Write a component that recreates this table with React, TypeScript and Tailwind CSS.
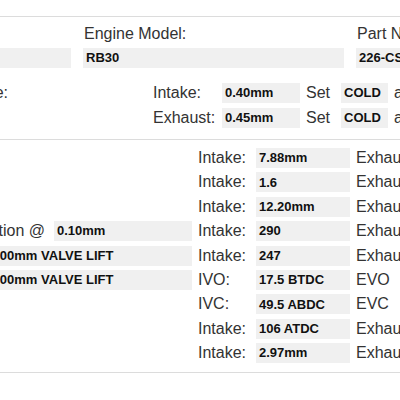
import React from "react";

function Box({ children, className = "" }: { children?: React.ReactNode; className?: string }) {
  return (
    <div
      className={
        "h-5 shrink-0 bg-[#f0f0f0] pl-[3px] flex items-center text-[13px] font-bold text-[#111] whitespace-nowrap overflow-hidden " +
        className
      }
    >
      {children}
    </div>
  );
}

function Label({ children, className = "" }: { children: React.ReactNode; className?: string }) {
  return (
    <div className={"shrink-0 text-[16px] leading-5 text-[#333] whitespace-nowrap " + className}>
      {children}
    </div>
  );
}

const rightRows: { l: string; v: string; r: string; rv: string }[] = [
  { l: "Intake:", v: "7.88mm", r: "Exhaust:", rv: "7.88mm" },
  { l: "Intake:", v: "1.6", r: "Exhaust:", rv: "1.6" },
  { l: "Intake:", v: "12.20mm", r: "Exhaust:", rv: "12.20mm" },
  { l: "Intake:", v: "290", r: "Exhaust:", rv: "290" },
  { l: "Intake:", v: "247", r: "Exhaust:", rv: "247" },
  { l: "IVO:", v: "17.5 BTDC", r: "EVO", rv: "57.5 BBDC" },
  { l: "IVC:", v: "49.5 ABDC", r: "EVC", rv: "9.5 ATDC" },
  { l: "Intake:", v: "106 ATDC", r: "Exhaust:", rv: "114 BTDC" },
  { l: "Intake:", v: "2.97mm", r: "Exhaust:", rv: "2.66mm" },
];

export default function App() {
  return (
    <div className="w-[400px] h-[400px] overflow-hidden bg-white font-['Liberation_Sans',Arial,sans-serif]">
      <div className="h-4" />
      {/* Section 1 */}
      <div className="border-t border-[#dcdcdc] pt-[7px] pb-[11px]">
        <div className="-ml-[190px] grid grid-cols-[261px_261px_261px] gap-x-3">
          <Label className="pl-px">Engine Make:</Label>
          <Label className="pl-px">Engine Model:</Label>
          <Label className="pl-px">Part Number:</Label>
          <Box className="mt-1">NISSAN</Box>
          <Box className="mt-1">RB30</Box>
          <Box className="mt-1">226-CS</Box>
        </div>
        <div className="mt-[15px] flex items-center">
          <div className="w-[8px] shrink-0 flex justify-end">
            <Label>Valve Clearance:</Label>
          </div>
          <Label className="ml-[145px] w-[69px]">Intake:</Label>
          <Box className="w-[78px]">0.40mm</Box>
          <Label className="ml-[6px] w-[35px]">Set</Label>
          <Box className="w-[47px]">COLD</Box>
          <Label className="ml-[6px]">at</Label>
        </div>
        <div className="mt-[5px] flex items-center">
          <Label className="ml-[153px] w-[69px]">Exhaust:</Label>
          <Box className="w-[78px]">0.45mm</Box>
          <Label className="ml-[6px] w-[35px]">Set</Label>
          <Box className="w-[47px]">COLD</Box>
          <Label className="ml-[6px]">at</Label>
        </div>
      </div>
      {/* Section 2 */}
      <div className="border-t border-b border-[#dcdcdc] pt-2 pb-[9px] flex gap-x-[6px]">
        <div className="w-[192px] shrink-0 flex flex-col gap-y-[4.4px]">
          <div className="h-5" />
          <div className="h-5" />
          <div className="h-5" />
          <div className="h-5 flex items-center justify-end gap-x-[9px]">
            <Label>Advertised Duration @</Label>
            <Box className="w-[138px]">0.10mm</Box>
          </div>
          <Box className="-ml-[14px] w-[206px]">1.00mm VALVE LIFT</Box>
          <Box className="-ml-[14px] w-[206px]">1.00mm VALVE LIFT</Box>
          <div className="h-5" />
          <div className="h-5" />
          <div className="h-5" />
        </div>
        <div className="flex flex-col gap-y-[4.4px]">
          {rightRows.map((r, i) => (
            <div key={i} className="h-5 flex items-center">
              <Label className="w-[58px]">{r.l}</Label>
              <Box className="w-[94px]">{r.v}</Box>
              <Label className="ml-[6px] w-[58px]">{r.r}</Label>
              <Box className="w-[94px]">{r.rv}</Box>
            </div>
          ))}
        </div>
      </div>
    </div>
  );
}
